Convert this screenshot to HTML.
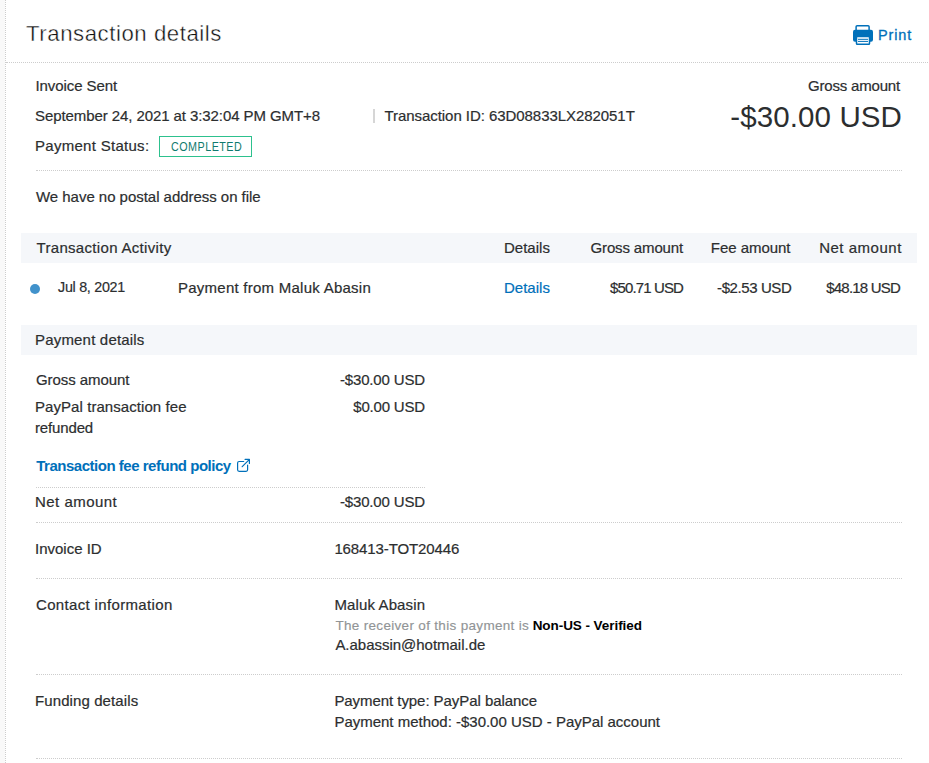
<!DOCTYPE html>
<html><head><meta charset="utf-8"><title>Transaction details</title>
<style>
html,body{margin:0;padding:0;background:#fff;}
body{width:929px;height:763px;overflow:hidden;position:relative;font-family:"Liberation Sans",sans-serif;}
.t{position:absolute;white-space:nowrap;}
.deco{position:absolute;}
.hd{position:absolute;height:1px;background:repeating-linear-gradient(90deg,#cdcdcd 0 1px,transparent 1px 2px);}
.hs{position:absolute;height:1px;background:#cdcdcd;}
.band{position:absolute;background:#f5f7fa;}
</style></head><body>
<div class="deco" style="left:0;top:0;width:5px;height:763px;background:#f9f9f9"></div>
<div class="deco" style="left:5px;top:0;width:0;height:763px;border-left:1px dotted #cdcdcd"></div>
<div class="deco hs" style="left:6px;top:62px;width:2px"></div><div class="deco hd" style="left:9px;top:62px;width:920px"></div>
<div class="deco hs" style="left:36px;top:170px;width:2px"></div><div class="deco hd" style="left:39px;top:170px;width:863px"></div>
<div class="deco band" style="left:21px;top:233px;width:896px;height:30px"></div>
<div class="deco band" style="left:21px;top:325px;width:896px;height:30px"></div>
<div class="deco hd" style="left:36px;top:487px;width:389px"></div>
<div class="deco hs" style="left:36px;top:522px;width:2px"></div><div class="deco hd" style="left:39px;top:522px;width:863px"></div>
<div class="deco hs" style="left:36px;top:578px;width:2px"></div><div class="deco hd" style="left:39px;top:578px;width:863px"></div>
<div class="deco hs" style="left:36px;top:674px;width:2px"></div><div class="deco hd" style="left:39px;top:674px;width:863px"></div>
<div class="deco hs" style="left:36px;top:758px;width:2px"></div><div class="deco hd" style="left:39px;top:758px;width:863px"></div>
<div class="deco" style="left:373px;top:109px;width:2px;height:14px;background:#d6d6d6"></div>
<div class="deco" style="left:159px;top:136px;width:91px;height:19px;border:1px solid #2dc18e"></div>
<div class="deco" style="left:30px;top:284px;width:10px;height:10px;border-radius:50%;background:#4192cb"></div>
<svg class="deco" style="left:853px;top:25px" width="20" height="20" viewBox="0 0 20 20">
 <rect x="3.1" y="0.75" width="13" height="5" rx="1" fill="none" stroke="#0070ba" stroke-width="1.5"/>
 <rect x="0" y="4.8" width="20" height="12" rx="2" fill="#0070ba"/>
 <rect x="3.5" y="11.5" width="13" height="7.7" rx="0.8" fill="#fff" stroke="#0070ba" stroke-width="1.5"/>
 <rect x="5" y="13.8" width="10" height="1" fill="#0070ba"/>
 <rect x="5" y="15.9" width="10" height="1" fill="#0070ba"/>
</svg>
<svg class="deco" style="left:236px;top:458px" width="16" height="16" viewBox="0 0 16 16">
 <path d="M7.7 3.5H3.1a1.5 1.5 0 0 0-1.5 1.5v6.8a1.5 1.5 0 0 0 1.5 1.5h7a1.5 1.5 0 0 0 1.5-1.5V7.1" fill="none" stroke="#0070ba" stroke-width="1.2" stroke-linecap="round"/>
 <path d="M9.1 1.4H13.4V5.5M13.2 1.6L6.2 8.7" fill="none" stroke="#0070ba" stroke-width="1.2" stroke-linecap="round" stroke-linejoin="round"/>
</svg>
<div id="title" class="t" style="left:26.00px;top:23.13px;font-size:22.2px;line-height:22.2px;font-weight:400;color:#111111;letter-spacing:0.556px;-webkit-text-stroke:0.4px #fff;">Transaction details</div>
<div id="print" class="t" style="left:878.00px;top:27.68px;font-size:14.5px;line-height:14.5px;font-weight:400;color:#0070ba;letter-spacing:0.850px;-webkit-text-stroke:0.3px currentColor;">Print</div>
<div id="invsent" class="t" style="left:35.50px;top:78.25px;font-size:15px;line-height:15px;font-weight:400;color:#2c2e2f;letter-spacing:-0.091px;-webkit-text-stroke:0.2px currentColor;">Invoice Sent</div>
<div id="grosshdr" class="t" style="right:29.00px;top:78.25px;font-size:15px;line-height:15px;font-weight:400;color:#2c2e2f;letter-spacing:-0.182px;-webkit-text-stroke:0.2px currentColor;">Gross amount</div>
<div id="date" class="t" style="left:35.00px;top:108.25px;font-size:15px;line-height:15px;font-weight:400;color:#2c2e2f;letter-spacing:-0.081px;-webkit-text-stroke:0.2px currentColor;">September 24, 2021 at 3:32:04 PM GMT+8</div>
<div id="txid" class="t" style="left:384.50px;top:108.25px;font-size:15px;line-height:15px;font-weight:400;color:#2c2e2f;letter-spacing:-0.056px;-webkit-text-stroke:0.2px currentColor;">Transaction ID: 63D08833LX282051T</div>
<div id="bigamt" class="t" style="right:27.00px;top:101.92px;font-size:29.5px;line-height:29.5px;font-weight:400;color:#2c2e2f;letter-spacing:0.100px;">-$30.00 USD</div>
<div id="pstatus" class="t" style="left:35.00px;top:138.25px;font-size:15px;line-height:15px;font-weight:400;color:#2c2e2f;letter-spacing:0.286px;-webkit-text-stroke:0.2px currentColor;">Payment Status:</div>
<div id="completed" class="t" style="left:171.00px;top:141.38px;font-size:12.5px;line-height:12.5px;font-weight:400;color:#0f7a6e;letter-spacing:0.562px;transform:scaleX(0.86);transform-origin:0 0;">COMPLETED</div>
<div id="nopostal" class="t" style="left:36.00px;top:189.25px;font-size:15px;line-height:15px;font-weight:400;color:#2c2e2f;letter-spacing:-0.031px;-webkit-text-stroke:0.2px currentColor;">We have no postal address on file</div>
<div id="tahdr" class="t" style="left:36.50px;top:240.25px;font-size:15px;line-height:15px;font-weight:400;color:#2c2e2f;letter-spacing:0.316px;-webkit-text-stroke:0.2px currentColor;">Transaction Activity</div>
<div id="dethdr" class="t" style="left:503.90px;top:240.25px;font-size:15px;line-height:15px;font-weight:400;color:#2c2e2f;letter-spacing:0.033px;-webkit-text-stroke:0.2px currentColor;">Details</div>
<div id="grosshdr2" class="t" style="right:246.00px;top:240.25px;font-size:15px;line-height:15px;font-weight:400;color:#2c2e2f;letter-spacing:-0.145px;-webkit-text-stroke:0.2px currentColor;">Gross amount</div>
<div id="feehdr" class="t" style="right:138.60px;top:240.25px;font-size:15px;line-height:15px;font-weight:400;color:#2c2e2f;letter-spacing:-0.044px;-webkit-text-stroke:0.2px currentColor;">Fee amount</div>
<div id="nethdr" class="t" style="right:27.20px;top:240.25px;font-size:15px;line-height:15px;font-weight:400;color:#2c2e2f;letter-spacing:0.511px;-webkit-text-stroke:0.2px currentColor;">Net amount</div>
<div id="jul" class="t" style="left:58.20px;top:278.91px;font-size:15.4px;line-height:15.4px;font-weight:400;color:#2c2e2f;letter-spacing:-0.300px;-webkit-text-stroke:0.2px currentColor;transform:scaleX(0.93);transform-origin:0 0;">Jul 8, 2021</div>
<div id="payfrom" class="t" style="left:178.00px;top:280.25px;font-size:15px;line-height:15px;font-weight:400;color:#2c2e2f;letter-spacing:0.250px;-webkit-text-stroke:0.2px currentColor;">Payment from Maluk Abasin</div>
<div id="detlink" class="t" style="left:503.90px;top:280.25px;font-size:15px;line-height:15px;font-weight:400;color:#0070ba;letter-spacing:0.033px;-webkit-text-stroke:0.2px currentColor;">Details</div>
<div id="g5071" class="t" style="right:246.00px;top:280.25px;font-size:15px;line-height:15px;font-weight:400;color:#2c2e2f;letter-spacing:-0.867px;-webkit-text-stroke:0.2px currentColor;">$50.71 USD</div>
<div id="f253" class="t" style="right:137.60px;top:280.25px;font-size:15px;line-height:15px;font-weight:400;color:#2c2e2f;letter-spacing:-0.400px;-webkit-text-stroke:0.2px currentColor;">-$2.53 USD</div>
<div id="n4818" class="t" style="right:29.00px;top:280.25px;font-size:15px;line-height:15px;font-weight:400;color:#2c2e2f;letter-spacing:-0.800px;-webkit-text-stroke:0.2px currentColor;">$48.18 USD</div>
<div id="pdhdr" class="t" style="left:35.00px;top:332.25px;font-size:15px;line-height:15px;font-weight:400;color:#2c2e2f;letter-spacing:0.186px;-webkit-text-stroke:0.2px currentColor;">Payment details</div>
<div id="grosslbl" class="t" style="left:36.00px;top:372.25px;font-size:15px;line-height:15px;font-weight:400;color:#2c2e2f;letter-spacing:-0.073px;-webkit-text-stroke:0.2px currentColor;">Gross amount</div>
<div id="grossval" class="t" style="right:504.10px;top:372.25px;font-size:15px;line-height:15px;font-weight:400;color:#2c2e2f;letter-spacing:-0.160px;-webkit-text-stroke:0.2px currentColor;">-$30.00 USD</div>
<div id="feelbl1" class="t" style="left:35.00px;top:399.25px;font-size:15px;line-height:15px;font-weight:400;color:#2c2e2f;letter-spacing:0.067px;-webkit-text-stroke:0.2px currentColor;">PayPal transaction fee</div>
<div id="feelbl2" class="t" style="left:35.00px;top:420.25px;font-size:15px;line-height:15px;font-weight:400;color:#2c2e2f;letter-spacing:-0.143px;-webkit-text-stroke:0.2px currentColor;">refunded</div>
<div id="feeval" class="t" style="right:504.10px;top:399.25px;font-size:15px;line-height:15px;font-weight:400;color:#2c2e2f;letter-spacing:-0.200px;-webkit-text-stroke:0.2px currentColor;">$0.00 USD</div>
<div id="policy" class="t" style="left:36.20px;top:458.25px;font-size:15px;line-height:15px;font-weight:700;color:#0070ba;letter-spacing:-0.479px;">Transaction fee refund policy</div>
<div id="netlbl" class="t" style="left:35.00px;top:494.25px;font-size:15px;line-height:15px;font-weight:400;color:#2c2e2f;letter-spacing:0.467px;-webkit-text-stroke:0.2px currentColor;">Net amount</div>
<div id="netval" class="t" style="right:504.10px;top:494.25px;font-size:15px;line-height:15px;font-weight:400;color:#2c2e2f;letter-spacing:-0.160px;-webkit-text-stroke:0.2px currentColor;">-$30.00 USD</div>
<div id="invidlbl" class="t" style="left:35.00px;top:541.25px;font-size:15px;line-height:15px;font-weight:400;color:#2c2e2f;letter-spacing:0.000px;-webkit-text-stroke:0.2px currentColor;">Invoice ID</div>
<div id="invidval" class="t" style="left:334.40px;top:541.25px;font-size:15px;line-height:15px;font-weight:400;color:#2c2e2f;letter-spacing:-0.114px;-webkit-text-stroke:0.2px currentColor;">168413-TOT20446</div>
<div id="contactlbl" class="t" style="left:36.00px;top:597.25px;font-size:15px;line-height:15px;font-weight:400;color:#2c2e2f;letter-spacing:0.344px;-webkit-text-stroke:0.2px currentColor;">Contact information</div>
<div id="maluk" class="t" style="left:334.40px;top:597.25px;font-size:15px;line-height:15px;font-weight:400;color:#2c2e2f;letter-spacing:0.127px;-webkit-text-stroke:0.2px currentColor;">Maluk Abasin</div>
<div id="receiver" class="t" style="left:335.40px;top:618.52px;font-size:13.5px;line-height:13.5px;font-weight:400;color:#919496;letter-spacing:0.320px;-webkit-text-stroke:0.15px currentColor;">The receiver of this payment is</div>
<div id="nonus" class="t" style="right:287.10px;top:618.52px;font-size:13.5px;line-height:13.5px;font-weight:700;color:#000000;letter-spacing:-0.062px;">Non-US - Verified</div>
<div id="email" class="t" style="left:335.40px;top:637.25px;font-size:15px;line-height:15px;font-weight:400;color:#2c2e2f;letter-spacing:-0.021px;-webkit-text-stroke:0.2px currentColor;">A.abassin@hotmail.de</div>
<div id="fundlbl" class="t" style="left:35.00px;top:693.25px;font-size:15px;line-height:15px;font-weight:400;color:#2c2e2f;letter-spacing:0.100px;-webkit-text-stroke:0.2px currentColor;">Funding details</div>
<div id="ptype" class="t" style="left:334.40px;top:693.25px;font-size:15px;line-height:15px;font-weight:400;color:#2c2e2f;letter-spacing:-0.059px;-webkit-text-stroke:0.2px currentColor;">Payment type: PayPal balance</div>
<div id="pmethod" class="t" style="left:334.40px;top:714.25px;font-size:15px;line-height:15px;font-weight:400;color:#2c2e2f;letter-spacing:-0.009px;-webkit-text-stroke:0.2px currentColor;">Payment method: -$30.00 USD - PayPal account</div>
</body></html>
